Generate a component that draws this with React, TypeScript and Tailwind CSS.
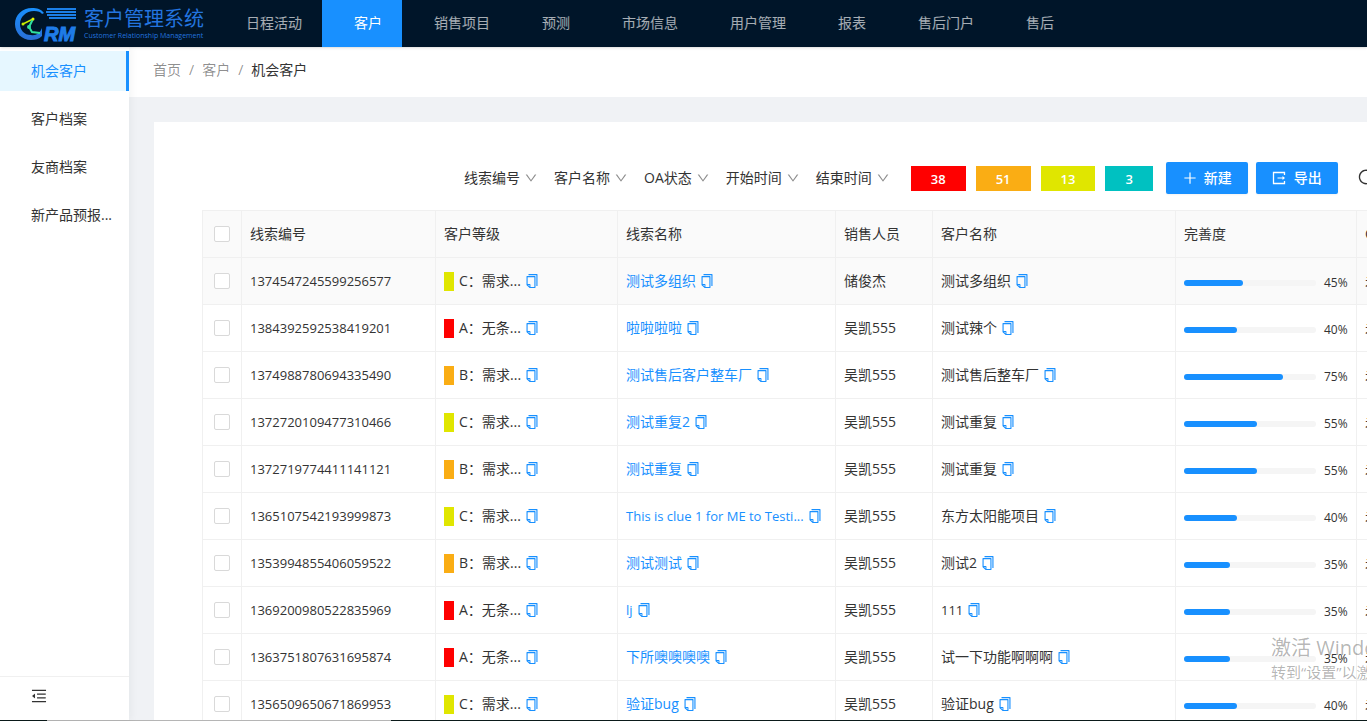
import React from 'react';
import { AiOutlineCopy, AiOutlineDown, AiOutlineMenuFold, AiOutlinePlus, AiOutlineReload } from 'react-icons/ai';

type Level = 'A' | 'B' | 'C';

interface Clue {
  id: string;
  level: Level;
  clueName: string;
  sales: string;
  customer: string;
  percent: number;
}

const NAV = ['日程活动', '客户', '销售项目', '预测', '市场信息', '用户管理', '报表', '售后门户', '售后'];
const MENU = ['机会客户', '客户档案', '友商档案', '新产品预报...'];
const FILTERS = ['线索编号', '客户名称', 'OA状态', '开始时间', '结束时间'];

const STATS = [
  { count: 38, color: 'bg-[#ff0000]' },
  { count: 51, color: 'bg-[#faad14]' },
  { count: 13, color: 'bg-[#e0e600]' },
  { count: 3, color: 'bg-[#00c1c1]' },
];

const LEVELS: Record<Level, { text: string; color: string }> = {
  A: { text: 'A：无条...', color: 'bg-[#ff0000]' },
  B: { text: 'B：需求...', color: 'bg-[#faad14]' },
  C: { text: 'C：需求...', color: 'bg-[#e0e600]' },
};

const CLUES: Clue[] = [
  { id: '1374547245599256577', level: 'C', clueName: '测试多组织', sales: '储俊杰', customer: '测试多组织', percent: 45 },
  { id: '1384392592538419201', level: 'A', clueName: '啦啦啦啦', sales: '吴凯555', customer: '测试辣个', percent: 40 },
  { id: '1374988780694335490', level: 'B', clueName: '测试售后客户整车厂', sales: '吴凯555', customer: '测试售后整车厂', percent: 75 },
  { id: '1372720109477310466', level: 'C', clueName: '测试重复2', sales: '吴凯555', customer: '测试重复', percent: 55 },
  { id: '1372719774411141121', level: 'B', clueName: '测试重复', sales: '吴凯555', customer: '测试重复', percent: 55 },
  { id: '1365107542193999873', level: 'C', clueName: 'This is clue 1 for ME to Testi...', sales: '吴凯555', customer: '东方太阳能项目', percent: 40 },
  { id: '1353994855406059522', level: 'B', clueName: '测试测试', sales: '吴凯555', customer: '测试2', percent: 35 },
  { id: '1369200980522835969', level: 'A', clueName: 'lj', sales: '吴凯555', customer: '111', percent: 35 },
  { id: '1363751807631695874', level: 'A', clueName: '下所噢噢噢噢', sales: '吴凯555', customer: '试一下功能啊啊啊', percent: 35 },
  { id: '1356509650671869953', level: 'C', clueName: '验证bug', sales: '吴凯555', customer: '验证bug', percent: 40 },
];

// Open Sans runs wide next to the CJK glyphs, so plain latin values go one size down
const sizeOf = (text: string) => (/^[\x20-\x7e]+$/.test(text) ? 'text-[13px]' : 'text-sm');

const Logo: React.FC = () => (
  <a href="#" className="flex w-[214px] shrink-0 items-center pl-[14px]">
    <svg width="64" height="36" viewBox="0 0 64 36" aria-hidden="true">
      <defs>
        <linearGradient id="logo-blue" x1="0" y1="0" x2="0" y2="1">
          <stop offset="0" stopColor="#1890ff" />
          <stop offset="1" stopColor="#2a6fd6" />
        </linearGradient>
      </defs>
      <path
        d="M30 7C27 3 23 2 18 2C8 2 1 9 1 18C1 27 8 34 17 34C21 34 25 33 28 30V22C26 27 22 30 17 29C10 29 6 24 6 18C6 11 12 5 20 5C24 5 27 6 28 8Z"
        fill="url(#logo-blue)"
      />
      <path d="M9 18L19 13" fill="none" stroke="#c8f000" strokeWidth="1.5" />
      <path d="M19 13L15 21L18 26L26 27" fill="none" stroke="#2fe0a0" strokeWidth="2" />
      <circle cx="19" cy="13" r="1.5" fill="#e8f500" />
      <circle cx="9" cy="18" r="1.5" fill="#c8f000" />
      <circle cx="15" cy="21" r="2" fill="#2fe0a0" />
      <path d="M33 3H62M32 6H62M33 9H62M35 12H62" stroke="#1b7fe8" strokeWidth="2" />
      <text
        x="30"
        y="35"
        fontFamily="Liberation Sans, sans-serif"
        fontSize="20"
        fontWeight="bold"
        fontStyle="italic"
        fill="#1f7ce8"
        stroke="#1f7ce8"
      >
        RM
      </text>
    </svg>
    <span className="flex flex-col pl-[6px] text-[#2374df]">
      <span className="text-[20px] leading-6 whitespace-nowrap">客户管理系统</span>
      <span className="text-[7px] leading-[10px] whitespace-nowrap">Customer Relationship Management</span>
    </span>
  </a>
);

const ExportIcon: React.FC = () => (
  <svg width="14" height="14" viewBox="0 0 14 14" fill="none" stroke="currentColor" aria-hidden="true">
    <path d="M12.5 4V1.5H1.5V12.5H12.5V10" strokeWidth="1.3" />
    <path d="M5.5 7H12" />
    <path d="M10.5 5L13 7L10.5 9Z" fill="currentColor" stroke="none" />
  </svg>
);

const CopyButton: React.FC = () => (
  <button type="button" aria-label="复制" className="shrink-0 text-[#1890ff]">
    <AiOutlineCopy size={16} />
  </button>
);

const HeadCell: React.FC<{ className: string; children: React.ReactNode }> = ({ className, children }) => (
  <th scope="col" className={`h-[47px] border-r border-b border-[#f0f0f0] px-2 text-left font-normal ${className}`}>
    {children}
  </th>
);

const Cell: React.FC<{ children: React.ReactNode }> = ({ children }) => (
  <td className="h-[47px] border-r border-b border-[#f0f0f0] px-2 whitespace-nowrap">{children}</td>
);

const Checkbox: React.FC<{ label: string }> = ({ label }) => (
  <input
    type="checkbox"
    aria-label={label}
    className="mx-auto block size-4 appearance-none rounded-xs border border-[#d9d9d9] bg-white"
  />
);

const ClueRow: React.FC<{ clue: Clue; active: boolean }> = ({ clue, active }) => (
  <tr className={active ? 'bg-[#fafafa]' : 'bg-white'}>
    <Cell>
      <Checkbox label={clue.id} />
    </Cell>
    <Cell>
      <span className="text-[13px]">{clue.id}</span>
    </Cell>
    <Cell>
      <div className="flex items-center">
        <span className={`mr-[5px] h-[19px] w-[10px] ${LEVELS[clue.level].color}`}></span>
        <span className="mr-[3px]">{LEVELS[clue.level].text}</span>
        <CopyButton />
      </div>
    </Cell>
    <Cell>
      <div className="flex items-center gap-[3px]">
        <a href="#" className={`text-[#1890ff] ${sizeOf(clue.clueName)}`}>{clue.clueName}</a>
        <CopyButton />
      </div>
    </Cell>
    <Cell>{clue.sales}</Cell>
    <Cell>
      <div className="flex items-center gap-[3px]">
        <span className={sizeOf(clue.customer)}>{clue.customer}</span>
        <CopyButton />
      </div>
    </Cell>
    <Cell>
      <div className="flex items-center gap-2 pt-1">
        <div className="h-[6px] w-[132px] rounded-full bg-[#f5f5f5]">
          <div className="h-full rounded-full bg-[#1890ff]" style={{ width: `${clue.percent}%` }}></div>
        </div>
        <span className="text-xs">{clue.percent}%</span>
      </div>
    </Cell>
    <Cell>未提交</Cell>
  </tr>
);

const App: React.FC = () => {
  return (
    <div className="relative flex h-screen flex-col overflow-hidden bg-[#f0f2f5] font-['Open_Sans','Noto_Sans_CJK_SC',sans-serif] text-sm text-[#333]">
      <header className="z-10 flex h-[47px] shrink-0 bg-[#001529] shadow-sm">
        <Logo />
        <nav className="flex">
          {NAV.map((item) => (
            <a
              key={item}
              href="#"
              className={
                item === '客户'
                  ? 'flex items-center bg-[#1890ff] pr-5 pb-0.5 pl-8 whitespace-nowrap text-white'
                  : 'flex items-center pr-5 pb-0.5 pl-8 whitespace-nowrap text-white/65'
              }
            >
              {item}
            </a>
          ))}
        </nav>
      </header>

      <div className="flex min-h-0 flex-1">
        <aside className="z-5 flex w-[129px] shrink-0 flex-col bg-white shadow-[2px_0_8px_rgba(29,35,41,0.05)]">
          <nav className="flex flex-1 flex-col gap-2 pt-1">
            {MENU.map((item, index) => (
              <a
                key={item}
                href="#"
                className={
                  index === 0
                    ? 'flex h-10 items-center border-r-3 border-[#1890ff] bg-[#e6f7ff] pl-[31px] text-[#1890ff]'
                    : 'flex h-10 items-center pl-[31px] whitespace-nowrap'
                }
              >
                {item}
              </a>
            ))}
          </nav>
          <div className="flex h-11 items-center border-t border-[#f0f0f0] pb-1.5 pl-[30px]">
            <button type="button" aria-label="收起菜单">
              <AiOutlineMenuFold size={18} />
            </button>
          </div>
        </aside>

        <main className="min-w-0 flex-1 overflow-hidden">
          <nav className="flex h-[50px] items-center gap-2 bg-white pb-1 pl-6 text-black/45">
            <a href="#">首页</a>
            <span>/</span>
            <a href="#">客户</a>
            <span>/</span>
            <span className="text-[#333]">机会客户</span>
          </nav>

          <section className="mt-[25px] ml-[25px] w-max bg-white px-12 pt-10">
            <div className="flex h-8 items-center pl-[262px]">
              <div className="flex gap-4">
                {FILTERS.map((item) => (
                  <button key={item} type="button" className="flex items-center gap-1 whitespace-nowrap">
                    {item}
                    <AiOutlineDown size={14} className="text-black/45" />
                  </button>
                ))}
              </div>
              <div className="flex gap-[10px] pl-[21px]">
                {STATS.map((stat) => (
                  <span key={stat.count} className={`flex h-[25px] items-center px-5 pt-0.5 text-[13px] font-semibold text-white ${stat.color}`}>
                    {stat.count}
                  </span>
                ))}
              </div>
              <div className="flex gap-2 pl-[13px]">
                <button type="button" className="flex h-8 items-center gap-1.5 rounded-xs bg-[#1890ff] px-4 font-medium text-white shadow-xs">
                  <AiOutlinePlus size={16} />
                  新建
                </button>
                <button type="button" className="flex h-8 items-center gap-2 rounded-xs bg-[#1890ff] px-4 font-medium text-white shadow-xs">
                  <ExportIcon />
                  导出
                </button>
              </div>
              <button type="button" aria-label="刷新" className="ml-[19px] pb-0.5">
                <AiOutlineReload size={18} />
              </button>
            </div>

            <table className="mt-4 w-[1275px] table-fixed border-separate border-spacing-0 border-t border-l border-[#f0f0f0]">
              <thead className="bg-[#fafafa]">
                <tr>
                  <HeadCell className="w-[39px]">
                    <Checkbox label="全选" />
                  </HeadCell>
                  <HeadCell className="w-[194px]">线索编号</HeadCell>
                  <HeadCell className="w-[182px]">客户等级</HeadCell>
                  <HeadCell className="w-[218px]">线索名称</HeadCell>
                  <HeadCell className="w-[97px]">销售人员</HeadCell>
                  <HeadCell className="w-[243px]">客户名称</HeadCell>
                  <HeadCell className="w-[181px]">完善度</HeadCell>
                  <HeadCell className="w-[120px]">OA状态</HeadCell>
                </tr>
              </thead>
              <tbody>
                {CLUES.map((clue, index) => (
                  <ClueRow key={clue.id} clue={clue} active={index === 0} />
                ))}
              </tbody>
            </table>
          </section>
        </main>
      </div>

      <footer className="flex h-px shrink-0 bg-[#0b1a1a]">
        <div className="ml-[47px] w-[344px] bg-[#b5b5b5]"></div>
      </footer>

      <div className="pointer-events-none absolute bottom-[37px] left-[1271px] z-20 whitespace-nowrap text-black/30">
        <p className="text-[20px] leading-6">激活 Windows</p>
        <p className="text-[15px] leading-6">转到“设置”以激活 Windows。</p>
      </div>
    </div>
  );
};

export default App;
